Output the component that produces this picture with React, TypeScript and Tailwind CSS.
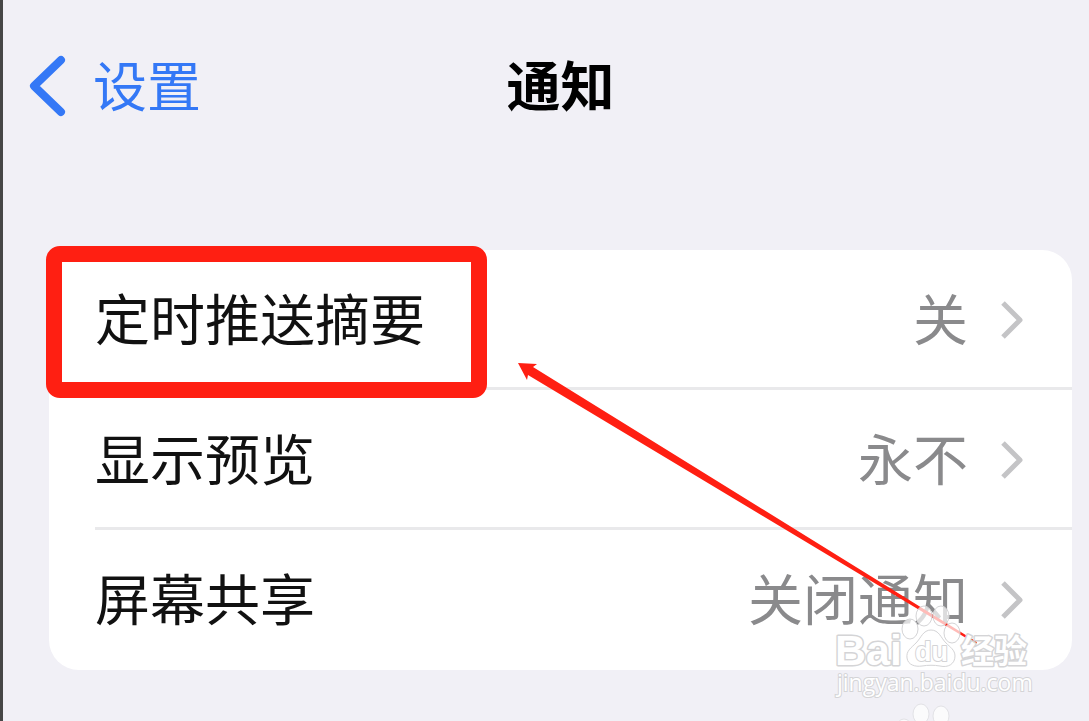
type SettingRow = {
  label: string;
  value: string;
};

const ROWS: SettingRow[] = [
  { label: "定时推送摘要", value: "关" },
  { label: "显示预览", value: "永不" },
  { label: "屏幕共享", value: "关闭通知" },
];

function BackIcon() {
  return (
    <svg viewBox="0 0 40 64" className="h-16 w-10 shrink-0" fill="none" aria-hidden="true">
      <path
        d="M34 6 L7 32 L34 58"
        stroke="#3478f6"
        strokeWidth="8"
        strokeLinecap="round"
        strokeLinejoin="round"
      />
    </svg>
  );
}

function DisclosureIcon() {
  return (
    <svg viewBox="0 0 24 40" className="h-10 w-6 shrink-0" fill="none" aria-hidden="true">
      <path d="M3 3 L20 20 L3 37" stroke="#c4c4c6" strokeWidth="5" strokeLinejoin="round" />
    </svg>
  );
}

function Row({ label, value }: SettingRow) {
  return (
    <li className="group pl-[46px]">
      <button
        type="button"
        className="flex h-[140px] w-full items-center border-b-[3px] border-[#e9e9eb] pr-12 pt-0.5 text-left text-[55px] leading-none group-last:border-transparent"
      >
        <span className="flex-1 whitespace-nowrap pt-1 text-[#111]">{label}</span>
        <span className="mr-8 whitespace-nowrap pt-1 text-[#8a8a8c]">{value}</span>
        <DisclosureIcon />
      </button>
    </li>
  );
}

// Red frame round the first row plus the pointer leading to it.
function Callout() {
  return (
    <>
      <div className="pointer-events-none absolute -left-[3px] -top-1 h-[152px] w-[441px] rounded-[14px] border-[16px] border-[#ff1f12]" />
      <svg
        viewBox="0 0 460 282"
        className="pointer-events-none absolute left-[469px] top-[112px] h-[282px] w-[460px]"
        aria-hidden="true"
      >
        <polygon points="0,1 19,2 15,5 459,280 458,282 10,13 9,18" fill="#ff1f12" />
      </svg>
    </>
  );
}

function Watermark() {
  return (
    <svg
      viewBox="0 0 210 121"
      className="pointer-events-none absolute bottom-0 right-[49px] h-[121px] w-[210px]"
      fill="#fff"
      fillOpacity="0.7"
      stroke="#d4d4d6"
      strokeWidth="1"
      aria-hidden="true"
    >
      <ellipse cx="80" cy="29" rx="8" ry="10" />
      <ellipse cx="94" cy="16" rx="8" ry="10" />
      <ellipse cx="111" cy="16" rx="8" ry="10" />
      <ellipse cx="122" cy="33" rx="8" ry="10" />
      <path d="M101 30 C93 30 91 38 86 43 C81 48 76 51 77 58 C78 65 85 67 92 66 C98 65 104 65 110 66 C118 68 125 64 125 56 C125 50 120 47 116 43 C111 38 109 30 101 30 Z" />
      <g
        fontFamily="'Liberation Sans', Arial, sans-serif"
        fontWeight="700"
        fillOpacity="1"
        strokeWidth="3"
        strokeLinejoin="round"
        paintOrder="stroke"
      >
        <text x="5" y="65" fontSize="43">
          Bai
        </text>
        <text x="85" y="61" fontSize="27" strokeWidth="2">
          du
        </text>
        <text x="131" y="63" fontSize="33" fontFamily="'Noto Sans CJK SC', sans-serif">
          经验
        </text>
      </g>
      <text
        x="7"
        y="91"
        fontSize="23"
        fontFamily="'Open Sans', sans-serif"
        fillOpacity="1"
        strokeWidth="2"
        paintOrder="stroke"
      >
        jingyan.baidu.com
      </text>
      <g stroke="#e2e2e6">
        <ellipse cx="74" cy="129" rx="8" ry="10" />
        <ellipse cx="91" cy="114" rx="8" ry="10" />
        <ellipse cx="111" cy="116" rx="8" ry="10" />
      </g>
    </svg>
  );
}

export default function App() {
  return (
    <main className="relative min-h-screen overflow-hidden border-l-[3px] border-[#464646] bg-[#f1f0f6] pl-[46px] pr-[17px] font-['Liberation_Sans','Noto_Sans_CJK_SC',sans-serif]">
      <header className="grid grid-cols-[1fr_auto_1fr] items-center pt-[54px]">
        <button
          type="button"
          className="-ml-[22px] flex items-center gap-[26px] justify-self-start text-[54px] leading-none text-[#3478f6]"
        >
          <BackIcon />
          <span className="whitespace-nowrap pt-1">设置</span>
        </button>
        <h1 className="pt-1 text-[54px] font-bold leading-none text-black">通知</h1>
      </header>

      <section className="relative mt-[132px]">
        <ul className="rounded-[30px] bg-white">
          {ROWS.map((row) => (
            <Row key={row.label} {...row} />
          ))}
        </ul>
        <Callout />
      </section>

      <Watermark />
    </main>
  );
}
